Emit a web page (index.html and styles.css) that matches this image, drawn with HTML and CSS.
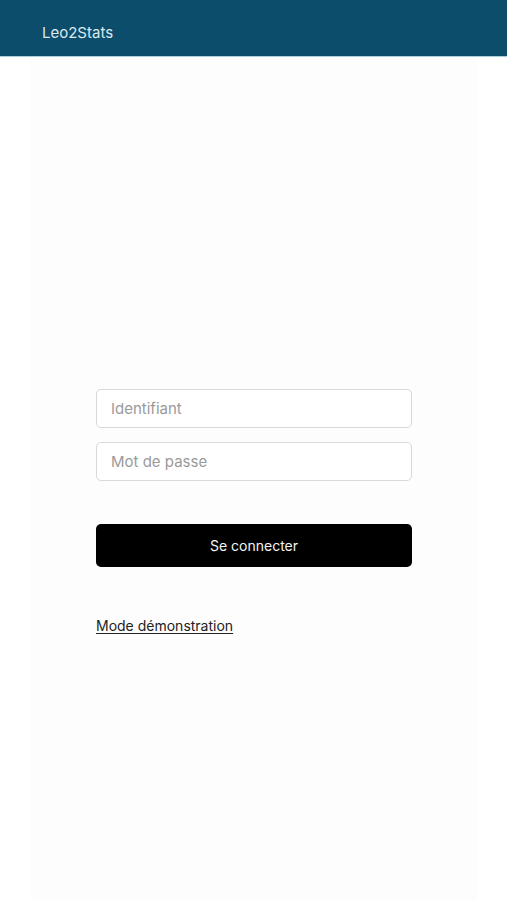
FILE: index.html
```html
<!DOCTYPE html>
<html lang="fr">
<head>
    <meta charset="UTF-8">
    <meta name="viewport" content="width=device-width, initial-scale=1.0">
    <title>Leo2Stats</title>
    <link rel="stylesheet" href="styles.css">
</head>
<body>
    <header class="topbar">
        <span class="brand">Leo2Stats</span>
    </header>
    <main class="page">
        <form class="login" onsubmit="return false;">
            <input type="text" class="field" placeholder="Identifiant">
            <input type="password" class="field" placeholder="Mot de passe">
            <button type="submit" class="btn-login">Se connecter</button>
            <a href="#" class="demo-link">Mode démonstration</a>
        </form>
    </main>
</body>
</html>
```

FILE: styles.css
```css
* {
    box-sizing: border-box;
    margin: 0;
    padding: 0;
}

html, body {
    height: 100%;
}

body {
    font-family: 'Inter', 'Liberation Sans', sans-serif;
    background-color: #ffffff;
    display: flex;
    flex-direction: column;
}

.topbar {
    height: 57px;
    flex-shrink: 0;
    background-color: #0c4d6b;
    display: flex;
    align-items: center;
    padding-left: 42px;
    border-bottom: 1px solid #a9cfdc;
}

.brand {
    color: #dde8ee;
    font-size: 15px;
    padding-top: 9px;
}

.page {
    flex: 1;
    margin: 0 30px;
    background-color: #fdfdfd;
    padding-top: 332px;
}

.login {
    width: 316px;
    margin-left: 66px;
    display: flex;
    flex-direction: column;
}

.field {
    height: 39px;
    border: 1px solid #d9d9d9;
    border-radius: 5px;
    background-color: #fff;
    padding: 0 14px;
    font-family: inherit;
    font-size: 15px;
    color: #333;
    margin-bottom: 14px;
}

.field::placeholder {
    color: #9a9a9a;
}

.btn-login {
    margin-top: 29px;
    height: 43px;
    border: none;
    border-radius: 5px;
    background-color: #000;
    color: #f4f4f4;
    font-family: inherit;
    font-size: 14px;
    cursor: pointer;
}

.demo-link {
    margin-top: 50px;
    align-self: flex-start;
    color: #222;
    font-size: 14px;
    text-decoration: underline;
    text-underline-offset: 2px;
}
```
